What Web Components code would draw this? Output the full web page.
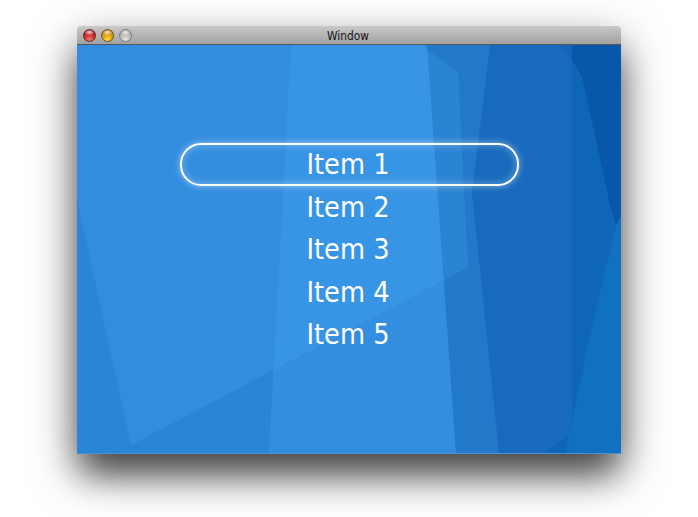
<!DOCTYPE html>
<html>
<head>
<meta charset="utf-8">
<title>Window</title>
<style>
  html, body { margin: 0; height: 100%; background: #fff; overflow: hidden; }
  body { font-family: "DejaVu Sans", "Liberation Sans", sans-serif; font-stretch: condensed; }
</style>
</head>
<body>
<mac-window title="Window">
  <item-menu>
    <menu-item selected>Item 1</menu-item>
    <menu-item>Item 2</menu-item>
    <menu-item>Item 3</menu-item>
    <menu-item>Item 4</menu-item>
    <menu-item>Item 5</menu-item>
  </item-menu>
</mac-window>

<script>
// Boton de la barra de titulo
class TrafficLight extends HTMLElement {
  constructor() {
    super();
    this.attachShadow({ mode: 'open' });
    this.shadowRoot.innerHTML = `
      <style>
        :host {
          display: block;
          width: 13px;
          height: 13px;
          border-radius: 50%;
          box-sizing: border-box;
          border: 1px solid var(--edge);
          background:
            radial-gradient(ellipse 50% 30% at 50% 20%, rgba(255,255,255,.8), rgba(255,255,255,0) 100%),
            radial-gradient(circle at 50% 90%, var(--light), var(--mid) 55%, var(--dark) 100%);
        }
        :host([color="red"]) { --light: #f07a72; --mid: #cc2228; --dark: #8e1014; --edge: #5e2224; }
        :host([color="yellow"]) { --light: #ffdc3e; --mid: #e0960c; --dark: #9a6006; --edge: #6c501a; }
        :host([color="gray"]) { --light: #e6e6e6; --mid: #b6b6b6; --dark: #8a8a8a; --edge: #7c7c7c; }
      </style>`;
  }
}

// Ventana con barra de titulo y fondo de poligonos
class MacWindow extends HTMLElement {
  constructor() {
    super();
    this.attachShadow({ mode: 'open' });
    this.shadowRoot.innerHTML = `
      <style>
        :host {
          display: flex;
          flex-direction: column;
          width: 544px;
          height: 428px;
          margin: 26px 0 0 77px;
          border-radius: 4px 4px 0 0;
          box-shadow: 0 24px 30px -6px rgba(0, 0, 0, .45), 0 18px 46px rgba(0, 0, 0, .55);
        }
        .bar {
          flex: none;
          display: flex;
          align-items: center;
          gap: 5px;
          height: 19px;
          box-sizing: border-box;
          padding: 0 0 0 6px;
          position: relative;
          border-radius: 4px 4px 0 0;
          background: linear-gradient(#c9c9c9, #bdbdbd 30%, #a1a1a1);
          border-bottom: 1px solid #55585c;
        }
        .title {
          position: absolute;
          left: 0;
          right: 2px;
          top: 3px;
          text-align: center;
          font-size: 11.8px;
          line-height: 14px;
          color: #111;
        }
        .body {
          flex: 1;
          position: relative;
          display: flex;
          justify-content: center;
          padding-top: 98px;
          box-sizing: border-box;
          background: #2b85d7;
          border-bottom: 1px solid #4e90cc;
        }
        svg { position: absolute; inset: 0; width: 100%; height: 100%; }
        ::slotted(*) { position: relative; }
      </style>
      <div class="bar">
        <traffic-light color="red"></traffic-light>
        <traffic-light color="yellow"></traffic-light>
        <traffic-light color="gray"></traffic-light>
        <div class="title"></div>
      </div>
      <div class="body">
        <svg viewBox="77 45 544 409" preserveAspectRatio="none">
          <polygon fill="#2279c9" points="427,45 621,45 621,454 456,454"/>
          <polygon fill="#176abd" points="490,45 621,45 621,454 499,454 472,193"/>
          <polygon fill="#0f66b8" points="572,45 621,45 621,454 572,454"/>
          <polygon fill="#0758a8" points="572,60 582,77 610,205 616,226 621,216 621,45 572,45"/>
          <polygon fill="#0758a8" points="560,45 572,60 572,45" opacity=".25"/>
          <polygon fill="#1270c0" points="566,454 589,340 616,226 621,216 621,454"/>
          <polygon fill="#0f66b8" points="545,454 568,436 566,454"/>
          <polygon fill="#52b0ff" opacity=".22" points="291,45 427,45 456,454 269,454"/>
          <polygon fill="#52b0ff" opacity=".2" points="77,45 420,45 458,72 468,268 131,446 77,200"/>
        </svg>
        <slot></slot>
      </div>`;
    this.shadowRoot.querySelector('.title').textContent = this.getAttribute('title') || '';
  }
}

// Lista centrada de opciones
class ItemMenu extends HTMLElement {
  constructor() {
    super();
    this.attachShadow({ mode: 'open' });
    this.shadowRoot.innerHTML = `
      <style>
        :host { display: block; width: 339px; margin-left: 1px; }
      </style>
      <slot></slot>`;
  }
}

// Una fila; la seleccionada lleva el borde brillante
class MenuItem extends HTMLElement {
  constructor() {
    super();
    this.attachShadow({ mode: 'open' });
    this.shadowRoot.innerHTML = `
      <style>
        :host {
          display: block;
          height: 42.5px;
          box-sizing: border-box;
          border: 2px solid transparent;
          border-radius: 21px;
          padding: 0 3px 0 0;
          text-align: center;
          color: #fff;
          font-size: 28.6px;
          line-height: 38px;
        }
        :host([selected]) {
          border-color: #fff;
          box-shadow: 0 0 7px rgba(255, 255, 255, .5), inset 0 0 9px rgba(255, 255, 255, .35);
        }
      </style>
      <slot></slot>`;
  }
}

customElements.define('traffic-light', TrafficLight);
customElements.define('mac-window', MacWindow);
customElements.define('item-menu', ItemMenu);
customElements.define('menu-item', MenuItem);
</script>
</body>
</html>
